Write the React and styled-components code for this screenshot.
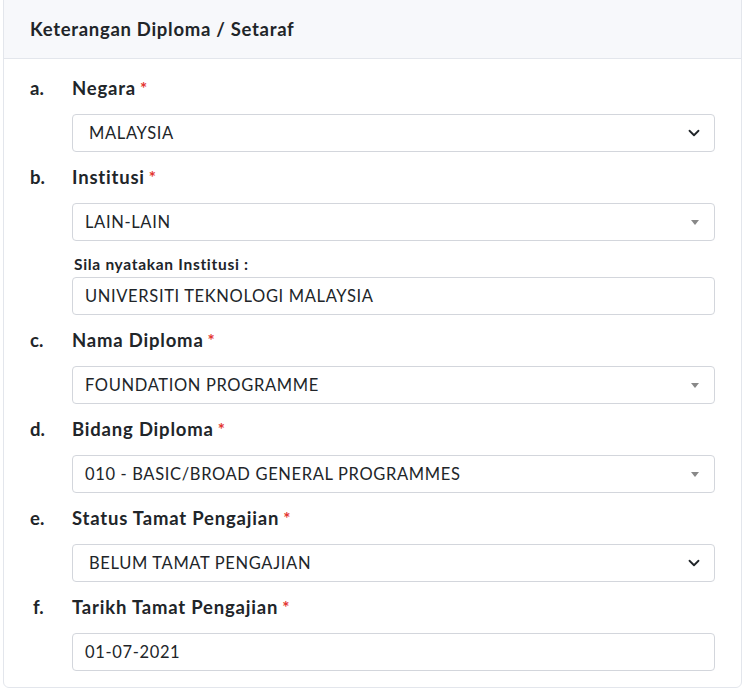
import React from 'react';
import styled, { createGlobalStyle } from 'styled-components';

const GlobalStyle = createGlobalStyle`
  body {
    margin: 0;
    background: #fff;
    font-family: 'Lato', 'Noto Sans', sans-serif;
    color: #212529;
  }
`;

const Card = styled.section`
  width: 739px;
  margin: -1px 0 0 3px;
  border: 1px solid #e3e6ec;
  border-radius: 0 0 6px 6px;
  background: #fff;
  box-sizing: border-box;
`;

const Header = styled.div`
  height: 59px;
  display: flex;
  align-items: center;
  padding: 0 26px;
  background: #f7f8fb;
  border-bottom: 1px solid #e3e6ec;
  font-size: 18.5px;
  letter-spacing: 0.7px;
  font-weight: 700;
  box-sizing: border-box;
`;

const Body = styled.div`
  padding: 17px 26px 16px 26px;
  display: flex;
  flex-direction: column;
  gap: 13px;
`;

const Field = styled.div`
  display: grid;
  grid-template-columns: 42px 1fr;
  grid-template-rows: 24px auto;
  row-gap: 14px;
`;

const Letter = styled.div`
  font-size: 18.5px;
  font-weight: 700;
  line-height: 24px;
  height: 24px;
  padding-left: ${p => p.$indent || 0}px;
`;

const Label = styled.div`
  font-size: 18.5px;
  letter-spacing: 0.8px;
  font-weight: 700;
  line-height: 24px;
  height: 24px;
`;

const Star = styled.span`
  color: #e3342f;
  margin-left: 4px;
  font-size: 17px;
  line-height: 1;
`;

const Controls = styled.div`
  grid-column: 2;
  display: flex;
  flex-direction: column;
`;

const Box = styled.div`
  height: 38px;
  box-sizing: border-box;
  border: 1px solid #d3d6dc;
  border-radius: 4px;
  display: flex;
  align-items: center;
  justify-content: space-between;
  padding: ${p => (p.$native ? '0 14px 0 16px' : '0 12px')};
  font-size: 16.5px;
  letter-spacing: 0.65px;
  color: #212529;
  background: #fff;
`;

const SubLabel = styled.div`
  font-size: 15.5px;
  letter-spacing: 0.7px;
  font-weight: 700;
  line-height: 20px;
  height: 20px;
  margin: 13px 0 3px 2px;
`;

const Triangle = styled.span`
  width: 0;
  height: 0;
  border-left: 4px solid transparent;
  border-right: 4px solid transparent;
  border-top: 5px solid #888;
  margin-right: 3px;
`;

const Chevron = () => (
  <svg width="12" height="12" viewBox="0 0 16 16">
    <path d="M2 5l6 6 6-6" fill="none" stroke="#212529" strokeWidth="2.4" strokeLinecap="round" strokeLinejoin="round" />
  </svg>
);

const fields = [
  { key: 'a', label: 'Negara', value: 'MALAYSIA', kind: 'native' },
  { key: 'b', label: 'Institusi', value: 'LAIN-LAIN', kind: 'select2', extra: { label: 'Sila nyatakan Institusi :', value: 'UNIVERSITI TEKNOLOGI MALAYSIA' } },
  { key: 'c', label: 'Nama Diploma', value: 'FOUNDATION PROGRAMME', kind: 'select2' },
  { key: 'd', label: 'Bidang Diploma', value: '010 - BASIC/BROAD GENERAL PROGRAMMES', kind: 'select2' },
  { key: 'e', label: 'Status Tamat Pengajian', value: 'BELUM TAMAT PENGAJIAN', kind: 'native' },
  { key: 'f', label: 'Tarikh Tamat Pengajian', value: '01-07-2021', kind: 'input', indent: 3 },
];

const Control = ({ kind, value }) => (
  <Box $native={kind === 'native'}>
    <span>{value}</span>
    {kind === 'native' && <Chevron />}
    {kind === 'select2' && <Triangle />}
  </Box>
);

export default function App() {
  return (
    <>
      <GlobalStyle />
      <Card>
        <Header>Keterangan Diploma / Setaraf</Header>
        <Body>
          {fields.map(f => (
            <Field key={f.key}>
              <Letter $indent={f.indent}>{f.key}.</Letter>
              <Label>
                {f.label}
                <Star>*</Star>
              </Label>
              <Controls>
                <Control kind={f.kind} value={f.value} />
                {f.extra && (
                  <>
                    <SubLabel>{f.extra.label}</SubLabel>
                    <Control kind="input" value={f.extra.value} />
                  </>
                )}
              </Controls>
            </Field>
          ))}
        </Body>
      </Card>
    </>
  );
}
